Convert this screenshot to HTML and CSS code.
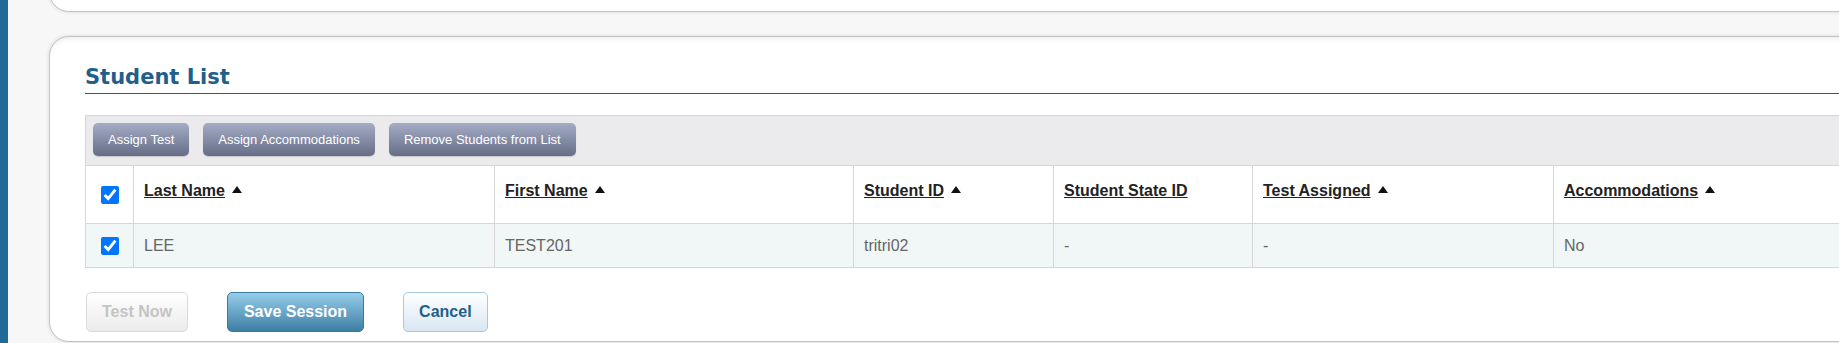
FILE: index.html
```html
<!DOCTYPE html>
<html lang="en">

<head>
    <meta charset="UTF-8">
    <meta name="viewport" content="width=device-width, initial-scale=1.0">
    <title>Student List</title>
    <link rel="stylesheet" href="styles.css">
</head>

<body>
    <div class="side-bar"></div>
    <div class="main">
        <div class="panel panel-top"></div>
        <div class="panel panel-list">
            <h2 class="panel-title">Student List</h2>
            <div class="toolbar">
                <button class="btn-tool">Assign Test</button>
                <button class="btn-tool">Assign Accommodations</button>
                <button class="btn-tool">Remove Students from List</button>
            </div>
            <table class="student-table">
                <colgroup>
                    <col style="width: 48px">
                    <col style="width: 361px">
                    <col style="width: 359px">
                    <col style="width: 200px">
                    <col style="width: 199px">
                    <col style="width: 301px">
                    <col>
                </colgroup>
                <thead>
                    <tr>
                        <th class="col-check"><input type="checkbox" checked></th>
                        <th><a href="#">Last Name</a><span class="sort-up"></span></th>
                        <th><a href="#">First Name</a><span class="sort-up"></span></th>
                        <th><a href="#">Student ID</a><span class="sort-up"></span></th>
                        <th><a href="#">Student State ID</a></th>
                        <th><a href="#">Test Assigned</a><span class="sort-up"></span></th>
                        <th><a href="#">Accommodations</a><span class="sort-up"></span></th>
                    </tr>
                </thead>
                <tbody>
                    <tr>
                        <td class="col-check"><input type="checkbox" checked></td>
                        <td>LEE</td>
                        <td>TEST201</td>
                        <td>tritri02</td>
                        <td>-</td>
                        <td>-</td>
                        <td>No</td>
                    </tr>
                </tbody>
            </table>
            <div class="actions">
                <button class="btn btn-disabled" disabled>Test Now</button>
                <button class="btn btn-save">Save Session</button>
                <button class="btn btn-cancel">Cancel</button>
            </div>
        </div>
    </div>
</body>

</html>
```

FILE: styles.css
```css
html,
body {
    margin: 0;
    height: 100%;
    overflow: hidden;
}

body {
    display: flex;
    background-color: #f7f7f7;
    font-family: "Liberation Sans", Arial, sans-serif;
}

.side-bar {
    flex: none;
    width: 8px;
    background-color: #1f6a96;
}

.main {
    flex: none;
    padding-left: 41px;
}

.panel {
    box-sizing: border-box;
    width: 1900px;
    background-color: #fff;
    border: 1px solid #c2c2c2;
    border-radius: 20px;
    box-shadow: 0 0 4px rgba(0, 0, 0, 0.12), inset 0 5px 6px -5px rgba(0, 0, 0, 0.12);
}

.panel-top {
    height: 42px;
    margin-top: -30px;
}

.panel-list {
    height: 306px;
    margin-top: 24px;
    padding: 28px 35px 0;
}

.panel-title {
    margin: 0;
    padding-bottom: 3px;
    font: bold 21px/25px "DejaVu Sans", Verdana, sans-serif;
    color: #1f5f8b;
    border-bottom: 1px solid #1f5f8b;
}

.toolbar {
    display: flex;
    gap: 14px;
    margin-top: 21px;
    padding: 7px 7px 9px;
    background-color: #ebebed;
    border: 1px solid #d6d6d6;
    border-bottom: 0;
}

.btn-tool {
    height: 33px;
    padding: 0 15px;
    font: 13px/16px "Liberation Sans", Arial, sans-serif;
    color: #fff;
    border: 0;
    border-radius: 5px;
    background: linear-gradient(#a5acc5, #666d86);
    box-shadow: 0 1px 1px rgba(0, 0, 0, 0.15);
}

.student-table {
    width: 100%;
    table-layout: fixed;
    border-collapse: collapse;
    font-size: 16px;
}

.student-table th,
.student-table td {
    border: 1px solid #d6d6d6;
    text-align: left;
}

.student-table th {
    height: 41px;
    padding: 16px 10px 0;
    vertical-align: top;
    background-color: #fff;
}

.student-table th a {
    color: #222;
    font-weight: bold;
    text-decoration: underline;
}

.student-table td {
    height: 43px;
    padding: 0 10px;
    color: #666;
    background-color: #f1f6f6;
}

.student-table .col-check {
    padding: 0;
    text-align: center;
    vertical-align: middle;
}

.col-check input {
    width: 18px;
    height: 18px;
    margin: 0;
    vertical-align: middle;
}

.sort-up {
    display: inline-block;
    margin-left: 7px;
    border-left: 5px solid transparent;
    border-right: 5px solid transparent;
    border-bottom: 7px solid #111;
    vertical-align: 3px;
}

.actions {
    display: flex;
    gap: 39px;
    margin-top: 24px;
    padding-left: 1px;
}

.btn {
    height: 40px;
    padding: 0 15px;
    font: bold 16px "Liberation Sans", Arial, sans-serif;
    border: 1px solid;
    border-radius: 5px;
}

.btn-disabled {
    color: #c4c4c4;
    border-color: #dadada;
    background: linear-gradient(#ffffff, #ebebeb);
}

.btn-save {
    padding: 0 16px;
    color: #fff;
    border-color: #3b7aa0;
    background: linear-gradient(#96cdea, #3e7ea5);
}

.btn-cancel {
    color: #1f5f8b;
    border-color: #a7c7e2;
    background: linear-gradient(#ffffff, #d9e6f3);
}
```
